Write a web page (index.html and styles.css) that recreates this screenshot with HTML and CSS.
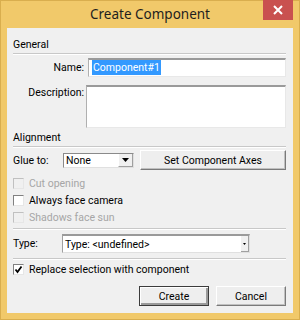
FILE: index.html
```html
<!DOCTYPE html>
<html lang="en">
<head>
  <meta charset="UTF-8" />
  <title>Create Component</title>
  <link rel="stylesheet" href="styles.css">
</head>
<body>
  <div class="window">
    <div class="titlebar">
      <span class="title">Create Component</span>
      <div class="close-btn">
        <svg width="10" height="10" viewBox="0 0 10 10">
          <path d="M1 1 L9 9 M9 1 L1 9" stroke="#fff" stroke-width="2" />
        </svg>
      </div>
    </div>

    <div class="client">
      <div class="section-head">General</div>

      <div class="row name-row">
        <label class="field-label">Name:</label>
        <div class="input"><span class="selected">Component#1</span></div>
      </div>

      <div class="row desc-row">
        <label class="field-label">Description:</label>
        <div class="textarea"></div>
      </div>

      <div class="section-head align-head">Alignment</div>

      <div class="row glue-row">
        <span class="glue-label">Glue to:</span>
        <div class="select">
          <span class="select-text">None</span>
          <span class="select-arrow">
            <svg width="7" height="4" viewBox="0 0 7 4"><path d="M0 0 H7 L3.5 4 Z" fill="#000" /></svg>
          </span>
        </div>
        <div class="button axes-btn">Set Component Axes</div>
      </div>

      <div class="checks">
        <div class="check disabled"><span class="box"></span>Cut opening</div>
        <div class="check"><span class="box"></span>Always face camera</div>
        <div class="check disabled"><span class="box"></span>Shadows face sun</div>
      </div>

      <div class="row type-row">
        <span class="type-label">Type:</span>
        <div class="combo">
          <span class="combo-text">Type: &lt;undefined&gt;</span>
          <span class="combo-arrow">
            <svg width="3" height="2" viewBox="0 0 3 2"><path d="M0 0 H3 L1.5 2 Z" fill="#000" /></svg>
          </span>
        </div>
      </div>

      <div class="check replace">
        <span class="box checked">
          <svg width="9" height="9" viewBox="0 0 9 9"><path d="M1.5 4.5 L3.5 7 L7.5 1.5" stroke="#000" stroke-width="1.8" fill="none" /></svg>
        </span>
        Replace selection with component
      </div>

      <div class="actions">
        <div class="button default-btn">Create</div>
        <div class="button">Cancel</div>
      </div>
    </div>
  </div>
</body>
</html>
```

FILE: styles.css
```css
body {
  margin: 0;
  font-family: Roboto, "Noto Sans", sans-serif;
  background: #f0c967;
}

.window {
  width: 300px;
  height: 320px;
  box-sizing: border-box;
  border: 1px solid #d9ae4e;
  background: #f1c96a;
  display: flex;
  flex-direction: column;
}

.titlebar {
  position: relative;
  height: 27px;
  display: flex;
  align-items: center;
  justify-content: center;
}

.title {
  font-family: "Noto Sans", sans-serif;
  font-size: 13.5px;
  color: #1e1e1e;
  margin-top: -1px;
}

.close-btn {
  position: absolute;
  top: -1px;
  right: 6px;
  width: 30px;
  height: 20px;
  background: #c9514f;
  display: flex;
  align-items: center;
  justify-content: center;
}

.client {
  margin: 0 6px;
  height: 285px;
  background: #f0f0f0;
  padding: 10px 7px 0 6px;
  box-sizing: border-box;
  font-size: 10.5px;
  color: #000;
}

.section-head {
  height: 14px;
  line-height: 14px;
  border-bottom: 1px solid #c8c8c8;
  box-shadow: 0 1px 0 #fff;
  padding-bottom: 1px;
}

.row {
  display: flex;
}

.name-row {
  margin-top: 4px;
  height: 19px;
  align-items: center;
}

.field-label {
  width: 71px;
  text-align: right;
  flex-shrink: 0;
}

.input {
  margin-left: 4px;
  flex: 1;
  height: 19px;
  box-sizing: border-box;
  background: #fff;
  border-top: 2px solid #9a9a9a;
  border-left: 1px solid #b0b0b0;
  border-right: 1px solid #e8e8e8;
  border-bottom: 1px solid #e8e8e8;
  padding-left: 3px;
  line-height: 16px;
}

.selected {
  background: #3399ff;
  color: #fff;
  padding: 1px 1px;
}

.desc-row {
  margin-top: 8px;
}

.desc-row .field-label {
  padding-top: 1px;
}

.textarea {
  margin-left: 2px;
  flex: 1;
  height: 43px;
  box-sizing: border-box;
  background: #fff;
  border-top: 2px solid #9a9a9a;
  border-left: 1px solid #b0b0b0;
  border-right: 1px solid #e8e8e8;
  border-bottom: 1px solid #e8e8e8;
}

.align-head {
  margin-top: 3px;
}

.glue-row {
  margin-top: 3px;
  height: 20px;
  align-items: center;
}

.glue-label {
  width: 50px;
}

.select {
  width: 71px;
  height: 15px;
  box-sizing: border-box;
  background: #fff;
  border: 1px solid #8a8a8a;
  border-right-color: #e0e0e0;
  border-bottom-color: #e0e0e0;
  display: flex;
  align-items: center;
}

.select-text {
  flex: 1;
  padding-left: 2px;
}

.select-arrow {
  width: 15px;
  height: 13px;
  display: flex;
  align-items: center;
  justify-content: center;
  background: #f0f0f0;
  border-left: 1px solid #fff;
  border-right: 1px solid #a0a0a0;
  border-bottom: 1px solid #a0a0a0;
  box-sizing: border-box;
}

.button {
  height: 20px;
  box-sizing: border-box;
  background: #eeeeee;
  border: 1px solid #fff;
  border-right-color: #7a7a7a;
  border-bottom-color: #7a7a7a;
  box-shadow: inset -1px -1px 0 #c0c0c0;
  display: flex;
  align-items: center;
  justify-content: center;
}

.axes-btn {
  margin-left: 6px;
  flex: 1;
}

.checks {
  margin-top: 5px;
  border-bottom: 1px solid #c8c8c8;
  box-shadow: 0 1px 0 #fff;
  padding-bottom: 2px;
}

.check {
  height: 17px;
  display: flex;
  align-items: center;
}

.check.disabled {
  color: #a6a6a6;
}

.box {
  width: 11px;
  height: 11px;
  box-sizing: border-box;
  background: #fff;
  border-top: 1px solid #808080;
  border-left: 1px solid #808080;
  border-right: 1px solid #e6e6e6;
  border-bottom: 1px solid #e6e6e6;
  margin-right: 5px;
  display: flex;
  align-items: center;
  justify-content: center;
}

.check.disabled .box {
  background: #f0f0f0;
  border-top-color: #c0c0c0;
  border-left-color: #c0c0c0;
}

.type-row {
  margin-top: 5px;
  height: 19px;
  align-items: center;
  border-bottom: 1px solid #c8c8c8;
  box-shadow: 0 1px 0 #fff;
  padding-bottom: 5px;
}

.type-label {
  width: 49px;
}

.combo {
  width: 188px;
  height: 19px;
  box-sizing: border-box;
  background: #fff;
  border-top: 2px solid #9a9a9a;
  border-left: 1px solid #a0a0a0;
  border-right: 1px solid #e0e0e0;
  border-bottom: 1px solid #e0e0e0;
  display: flex;
  align-items: center;
}

.combo-text {
  flex: 1;
  padding-left: 2px;
}

.combo-arrow {
  width: 8px;
  height: 16px;
  display: flex;
  align-items: center;
  justify-content: center;
  background: #f0f0f0;
  border-right: 1px solid #a0a0a0;
  border-bottom: 1px solid #a0a0a0;
  box-sizing: border-box;
}

.replace {
  margin-top: 2px;
}

.actions {
  margin-top: 8px;
  display: flex;
  justify-content: flex-end;
  gap: 7px;
}

.actions .button {
  width: 70px;
}

.default-btn {
  border: 1px solid #3c3c3c;
  box-shadow: inset 1px 1px 0 #fff, inset -2px -2px 0 #9a9a9a;
}
```
